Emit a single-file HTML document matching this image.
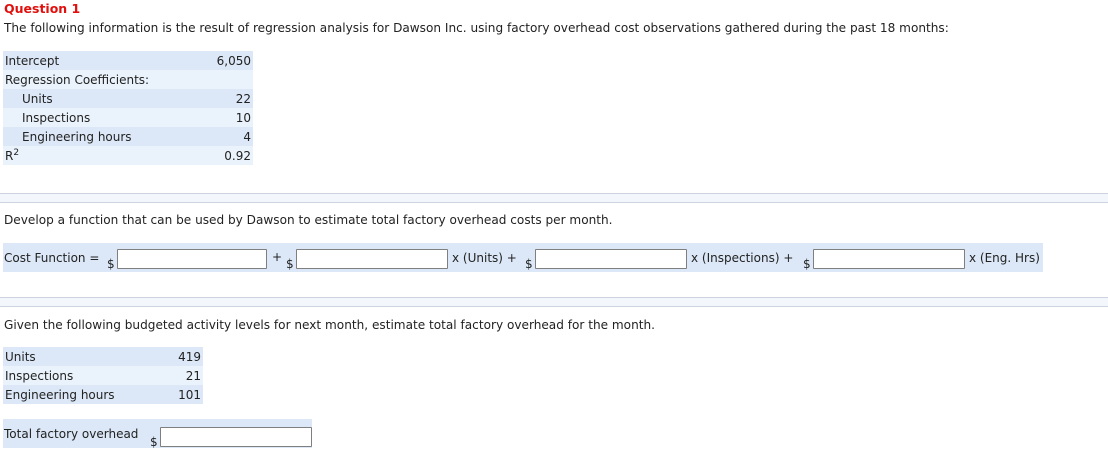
<!DOCTYPE html>
<html><head><style>
body{margin:0;width:1108px;height:464px;background:#fff;font-family:"DejaVu Sans",Verdana,sans-serif;font-size:12px;color:#222;position:relative;overflow:hidden}
.a{position:absolute;white-space:nowrap}
.d{background:#dce8f7}.l{background:#eaf3fc}
.r{position:absolute;height:19px;line-height:21px}
.inp{position:absolute;height:20px;background:#fff;border:1px solid #7f7f7f;box-sizing:border-box;border-radius:1px}
.sep{position:absolute;left:0;width:1108px;height:8px;background:#f3f6fa;border-top:1px solid #ccd5df;border-bottom:1px solid #ccd5df}
.dl{position:absolute;font-size:12px}
.p{font-size:12.1px}
</style></head><body>
<div class="a" style="left:4px;top:1px;font-weight:bold;color:#e0100d;font-size:12.5px">Question 1</div>
<div class="a p" style="left:4px;top:21px">The following information is the result of regression analysis for Dawson Inc. using factory overhead cost observations gathered during the past 18 months:</div>

<div class="r d" style="left:3px;top:51px;width:250px"><span class="a" style="left:2px">Intercept</span><span class="a" style="right:2px">6,050</span></div>
<div class="r l" style="left:3px;top:70px;width:250px"><span class="a" style="left:2px">Regression Coefficients:</span></div>
<div class="r d" style="left:3px;top:89px;width:250px"><span class="a" style="left:19px">Units</span><span class="a" style="right:2px">22</span></div>
<div class="r l" style="left:3px;top:108px;width:250px"><span class="a" style="left:19px">Inspections</span><span class="a" style="right:2px">10</span></div>
<div class="r d" style="left:3px;top:127px;width:250px"><span class="a" style="left:19px">Engineering hours</span><span class="a" style="right:2px">4</span></div>
<div class="r l" style="left:3px;top:146px;width:250px"><span class="a" style="left:2px">R<sup style="font-size:9px;vertical-align:5px;line-height:0">2</sup></span><span class="a" style="right:2px">0.92</span></div>

<div class="sep" style="top:193px"></div>
<div class="a p" style="left:4px;top:213px">Develop a function that can be used by Dawson to estimate total factory overhead costs per month.</div>

<div class="d" style="position:absolute;left:3px;top:243px;width:1040px;height:29px"></div>
<div class="a" style="left:4px;top:251px">Cost Function =</div>
<div class="dl" style="left:107px;top:257px">$</div><div class="inp" style="left:117px;top:249px;width:150px"></div>
<div class="a" style="left:272px;top:250px">+</div>
<div class="dl" style="left:286px;top:257px">$</div><div class="inp" style="left:296px;top:249px;width:152px"></div>
<div class="a" style="left:452px;top:251px">x (Units) +</div>
<div class="dl" style="left:525px;top:257px">$</div><div class="inp" style="left:535px;top:249px;width:152px"></div>
<div class="a" style="left:691px;top:251px">x (Inspections) +</div>
<div class="dl" style="left:803px;top:257px">$</div><div class="inp" style="left:813px;top:249px;width:152px"></div>
<div class="a" style="left:969px;top:251px">x (Eng. Hrs)</div>

<div class="sep" style="top:297px"></div>
<div class="a p" style="left:4px;top:318px">Given the following budgeted activity levels for next month, estimate total factory overhead for the month.</div>

<div class="r d" style="left:3px;top:347px;width:200px"><span class="a" style="left:2px">Units</span><span class="a" style="right:2px">419</span></div>
<div class="r l" style="left:3px;top:366px;width:200px"><span class="a" style="left:2px">Inspections</span><span class="a" style="right:2px">21</span></div>
<div class="r d" style="left:3px;top:385px;width:200px"><span class="a" style="left:2px">Engineering hours</span><span class="a" style="right:2px">101</span></div>

<div class="d" style="position:absolute;left:3px;top:419px;width:309px;height:29px"></div>
<div class="a" style="left:4px;top:427px">Total factory overhead</div>
<div class="dl" style="left:150px;top:435px">$</div><div class="inp" style="left:160px;top:427px;width:152px"></div>
</body></html>
